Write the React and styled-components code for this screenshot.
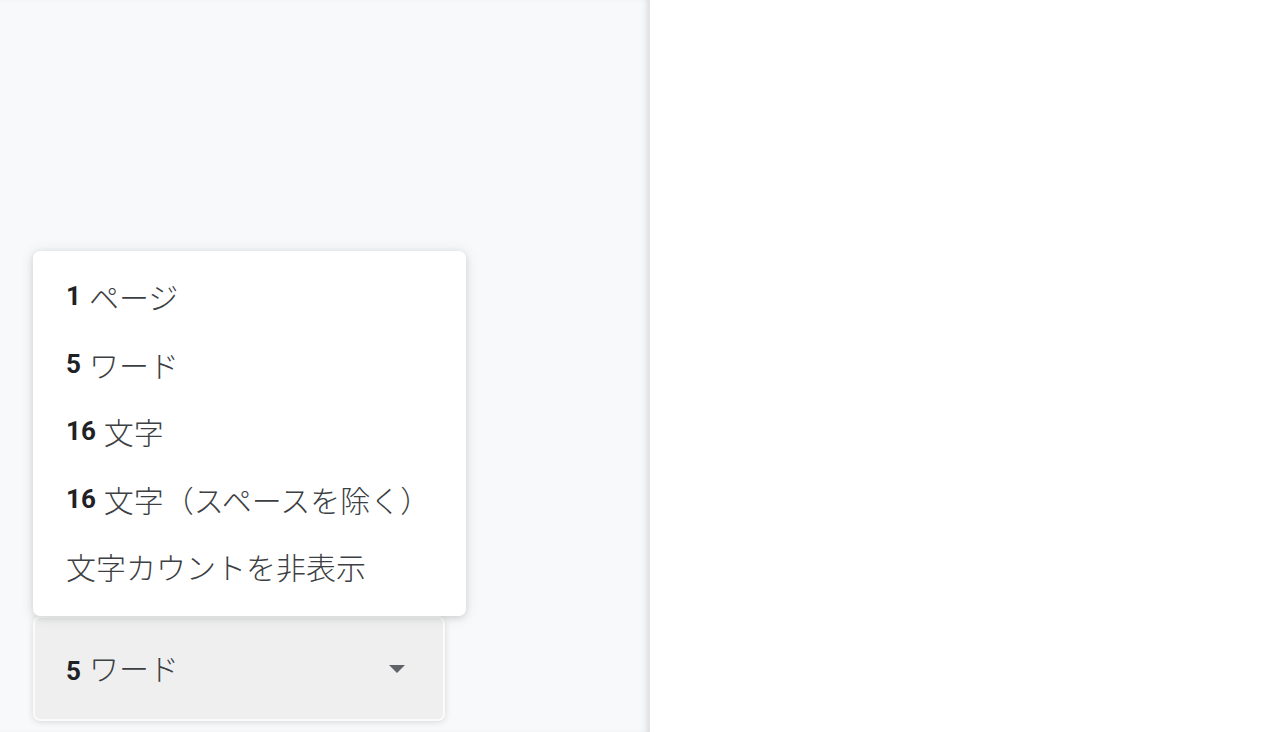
import React from "react";
import styled, { createGlobalStyle } from "styled-components";

const GlobalStyle = createGlobalStyle`
  html, body, #root {
    margin: 0;
    height: 100%;
  }
  body {
    font-family: "Noto Sans CJK JP", "Noto Sans", sans-serif;
    color: #202124;
    background: #ffffff;
    overflow: hidden;
  }
`;

const Page = styled.div`
  display: flex;
  height: 732px;
  width: 1280px;
`;

const SidePanel = styled.aside`
  width: 650px;
  flex-shrink: 0;
  background: #f8f9fa;
  box-shadow: inset -6px 0 8px -6px rgba(60, 64, 67, 0.25);
  border-right: 1px solid #e3e5e8;
  display: flex;
  flex-direction: column;
  justify-content: flex-end;
  padding: 0 0 11px 33px;
  box-sizing: border-box;
`;

const Canvas = styled.main`
  flex: 1;
  background: #ffffff;
`;

const CountPicker = styled.div`
  position: relative;
  width: 412px;
`;

const Menu = styled.ul`
  position: absolute;
  left: 0;
  bottom: 100%;
  width: 433px;
  margin: 0;
  padding: 12px 0 16px;
  list-style: none;
  background: #ffffff;
  border-radius: 7px;
  box-shadow: 0 2px 6px rgba(60, 64, 67, 0.15), 0 1px 14px rgba(60, 64, 67, 0.12);
`;

const MenuItem = styled.li`
  height: 67.5px;
  display: flex;
  align-items: center;
  padding-left: 33px;
  font-size: 30px;
  font-weight: 300;
  color: #3c4043;
  white-space: nowrap;
`;

const Count = styled.b`
  font-family: "Roboto", "Liberation Sans", sans-serif;
  font-weight: 700;
  font-size: 26px;
  color: #202124;
  margin-right: 8px;
`;

const Trigger = styled.button`
  width: 412px;
  height: 105px;
  display: flex;
  align-items: center;
  justify-content: space-between;
  padding: 0 38px 4px 31px;
  box-sizing: border-box;
  background: #efefef;
  border: 2px solid #fbfbfb;
  border-radius: 7px;
  box-shadow: 0 1px 6px rgba(60, 64, 67, 0.18);
  font-family: inherit;
  font-size: 30px;
  font-weight: 300;
  color: #3c4043;
  cursor: pointer;
`;

const Caret = styled.span`
  width: 0;
  height: 0;
  border-left: 8px solid transparent;
  border-right: 8px solid transparent;
  border-top: 8px solid #5f6368;
  margin-top: 4px;
`;

const options = [
  { n: "1", label: "ページ" },
  { n: "5", label: "ワード" },
  { n: "16", label: "文字" },
  { n: "16", label: "文字（スペースを除く）" },
  { n: null, label: "文字カウントを非表示" },
];

export default function App() {
  return (
    <Page>
      <GlobalStyle />
      <SidePanel>
        <CountPicker>
          <Menu>
            {options.map((o, i) => (
              <MenuItem key={i}>
                {o.n && <Count>{o.n}</Count>}
                {o.label}
              </MenuItem>
            ))}
          </Menu>
          <Trigger>
            <span>
              <Count>5</Count>ワード
            </span>
            <Caret />
          </Trigger>
        </CountPicker>
      </SidePanel>
      <Canvas />
    </Page>
  );
}
